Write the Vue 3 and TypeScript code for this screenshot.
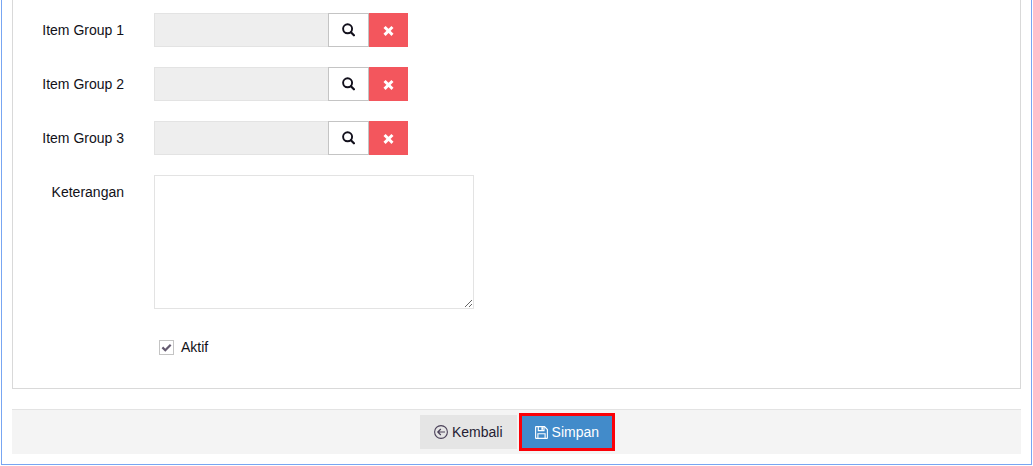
<script setup lang="ts">
import { ref } from 'vue'

interface ItemGroup {
  id: string
  label: string
  value: string
}

const groups = ref<ItemGroup[]>([
  { id: 'item-group-1', label: 'Item Group 1', value: '' },
  { id: 'item-group-2', label: 'Item Group 2', value: '' },
  { id: 'item-group-3', label: 'Item Group 3', value: '' },
])
const note = ref('')
const active = ref(true)
</script>

<template>
  <form class="frame" @submit.prevent>
    <div class="panel">
      <div v-for="group in groups" :key="group.id" class="row">
        <label class="label" :for="group.id">{{ group.label }}</label>
        <div class="lookup">
          <input :id="group.id" v-model="group.value" class="lookup-input" type="text" readonly />
          <button class="search" type="button" :aria-label="'Search ' + group.label">
            <svg width="13" height="14" viewBox="0 0 13 14" aria-hidden="true">
              <circle cx="5.6" cy="5.8" r="4.5" fill="none" stroke="currentColor" stroke-width="1.9" />
              <path d="M8.9 9.2 11.9 12.3" stroke="currentColor" stroke-width="2.2" stroke-linecap="round" />
            </svg>
          </button>
          <button class="clear" type="button" :aria-label="'Clear ' + group.label" @click="group.value = ''">
            <svg width="11" height="11" viewBox="0 0 11 11" aria-hidden="true">
              <path d="M2.6 3 8.4 8.8M8.4 3 2.6 8.8" stroke="currentColor" stroke-width="3" stroke-linecap="square" />
            </svg>
          </button>
        </div>
      </div>
      <div class="row">
        <label class="label" for="note">Keterangan</label>
        <textarea id="note" v-model="note" class="note"></textarea>
      </div>
      <label class="check">
        <input v-model="active" class="box" type="checkbox" />
        <svg v-if="active" class="tick" width="15" height="15" viewBox="0 0 15 15" aria-hidden="true">
          <path d="M3.4 7.4 6.3 10.3 11.7 4.7" fill="none" stroke="currentColor" stroke-width="2.2" />
        </svg>
        <span>Aktif</span>
      </label>
    </div>
    <div class="actions">
      <button class="button back" type="button">
        <svg width="14" height="14" viewBox="0 0 14 14" fill="none" stroke="#4a4058" aria-hidden="true">
          <circle cx="7" cy="7" r="6.4" stroke-width="1.1" />
          <path d="M11 7H4M6.8 4 3.8 7 6.8 10" stroke-width="1.2" />
        </svg>
        Kembali
      </button>
      <button class="button save" type="submit">
        <svg width="13" height="13" viewBox="0 0 13 13" fill="none" stroke="currentColor" stroke-width="1.1" aria-hidden="true">
          <path d="M.6 1.1Q.6.6 1.1.6H9.5L12.4 3.5V11.9Q12.4 12.4 11.9 12.4H1.1Q.6 12.4.6 11.9Z" />
          <path d="M3.3.8V4.6H9V.8M2.9 12.2V7.8H10.1V12.2" />
          <path d="M7.2 1.2V3.8" stroke-width="1.7" />
        </svg>
        Simpan
      </button>
    </div>
  </form>
</template>

<style>
body {
  background: #fff;
}
</style>

<style scoped>
.frame,
.frame * {
  box-sizing: border-box;
}
.frame {
  margin: 0 1px;
  padding: 0 10px 10px;
  border: 1px solid #78a6f2;
  border-top: 0;
  font: 14px/20px "Liberation Sans", Arial, sans-serif;
  color: #111118;
}
button,
input,
textarea {
  margin: 0;
  font: inherit;
}
button {
  display: inline-flex;
  align-items: center;
  justify-content: center;
  padding: 0;
  border: 0;
  cursor: pointer;
}
svg {
  flex: none;
}
.panel {
  display: flex;
  flex-direction: column;
  gap: 20px;
  padding: 13px 20px 31px 0;
  border: 1px solid #d9d9d9;
  border-top: 0;
}
.row {
  display: flex;
  align-items: flex-start;
}
.label {
  flex: none;
  width: 111px;
  margin-right: 30px;
  padding-top: 7px;
  text-align: right;
}
.lookup {
  display: flex;
  height: 34px;
}
.lookup-input {
  width: 174px;
  padding: 0 8px;
  border: 1px solid #e3e3e3;
  border-right: 0;
  border-radius: 0;
  background: #eee;
  outline: 0;
}
.search {
  width: 41px;
  border: 1px solid #c4c4c4;
  background: #fff;
  color: #12101c;
}
.clear {
  width: 39px;
  background: #f3565d;
  color: #fff;
}
.note {
  display: block;
  width: 320px;
  height: 134px;
  padding: 6px 12px;
  border: 1px solid #e3e3e3;
  border-radius: 0;
  background: #fff;
  resize: both;
}
.check {
  display: grid;
  grid-template-columns: 15px auto;
  column-gap: 7px;
  align-items: center;
  align-self: flex-start;
  margin: 8px 0 0 146px;
}
.box {
  grid-area: 1 / 1;
  appearance: none;
  width: 15px;
  height: 15px;
  border: 1px solid #c4c4c4;
  background: #fff;
}
.tick {
  grid-area: 1 / 1;
  color: #645a70;
  pointer-events: none;
}
.actions {
  display: flex;
  justify-content: center;
  gap: 4px;
  margin-top: 20px;
  padding: 5px 0;
  border-top: 1px solid #e3e3e3;
  background: #f4f4f4;
}
.button {
  gap: 4px;
  height: 34px;
  padding: 0 14px;
}
.back {
  background: #e5e5e5;
  color: #251d33;
}
.save {
  background: #428bca;
  color: #fff;
  outline: 3px solid #fb0007;
  outline-offset: -1px;
}
</style>
